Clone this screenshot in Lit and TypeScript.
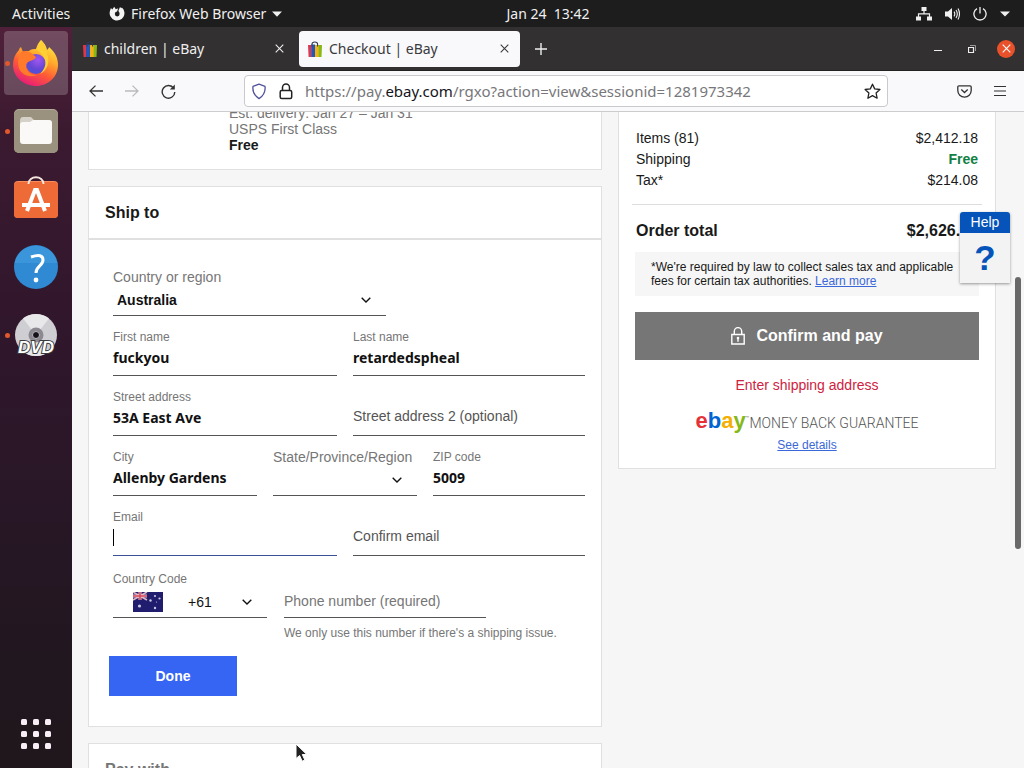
import { LitElement, html, css, svg } from "lit";
import { customElement } from "lit/decorators.js";
import { classMap } from "lit/directives/class-map.js";

const chevron = html`<svg class="chev" viewBox="0 0 10 6" width="10" height="6" aria-hidden="true">
  <path d="M.7.8 5 5 9.3.8" fill="none" stroke="#111" stroke-width="1.4" />
</svg>`;

const bag = html`<svg width="14" height="16" viewBox="0 0 14 16" aria-hidden="true">
  <path d="M0 4h3.5v12H0.6z" fill="#e0364c" />
  <path d="M3.2 3.5H7V16H3.2z" fill="#2458b8" />
  <path d="M7 4h4v12H7z" fill="#f2b31a" />
  <path d="M10.7 4H14l-.5 12h-2.8z" fill="#86b817" />
  <path d="M4 5.5V3.2C4 .2 9.6.2 9.6 3.2v2.3" fill="none" stroke="#333b52" stroke-width="1.1" />
</svg>`;

const cross = html`<svg width="9" height="9" viewBox="0 0 9 9" aria-hidden="true">
  <path d="M.7.7l7.6 7.6M8.3.7L.7 8.3" stroke="currentColor" stroke-width="1.1" />
</svg>`;

@customElement("desktop-bar")
class DesktopBar extends LitElement {
  static styles = css`
    :host {
      display: grid;
      grid-template-columns: 72px 1fr auto 1fr;
      align-items: center;
      height: 27px;
      background: #1d1d1d;
      color: #f0f0f0;
      font: 14px/27px "Noto Sans", sans-serif;
      white-space: nowrap;
    }
    button {
      border: 0;
      padding: 0;
      background: none;
      color: inherit;
      font: inherit;
      display: flex;
      align-items: center;
    }
    .activities { padding-left: 12px; }
    .app { padding-left: 37px; gap: 6px; }
    .clock { white-space: pre; }
    .tray { justify-self: end; gap: 13px; padding-right: 14px; }
  `;
  render() {
    return html`
      <button class="activities">Activities</button>
      <button class="app">
        <svg width="16" height="16" viewBox="0 0 16 16" aria-hidden="true">
          <path d="M5.200.8 6.800 3.200q1-.7 2.400-.7L8 5.600a2.400 2.400 0 1 0 2.600 2.400c0-1.400-.6-2.300-1.300-3L11 1l1.300 1.300.6-.8A7.400 7.400 0 1 1 .8 5.600L1.900 2l1.400 1.400z" fill="#f4f4f4" />
        </svg>
        Firefox Web Browser
        <svg width="10" height="6" viewBox="0 0 10 6" aria-hidden="true"><path d="M0 .5h10L5 5.8z" fill="#f0f0f0" /></svg>
      </button>
      <button class="clock">Jan 24  13:42</button>
      <button class="tray" aria-label="System menu">
        <svg width="16" height="14" viewBox="0 0 16 14" fill="#f0f0f0">
          <path d="M5.5 0h5v4h-5zM0 9.5h5v4H0zM11 9.5h5v4h-5z" />
          <path d="M8 3.5v3.2M2.5 10V6.8h11V10" fill="none" stroke="#f0f0f0" stroke-width="1.2" />
        </svg>
        <svg width="15" height="14" viewBox="0 0 15 14" fill="#f0f0f0">
          <path d="M0 4.5h3L7 1v12L3 9.5H0z" />
          <path d="M9 4.6q1.6 2.4 0 4.8M11 3q2.6 4 0 8M13 1.6q3 5.4 0 10.8" fill="none" stroke="#f0f0f0" stroke-width="1.1" />
        </svg>
        <svg width="14" height="14" viewBox="0 0 14 14" fill="none" stroke="#f0f0f0" stroke-width="1.3">
          <path d="M4 1.6a6.1 6.1 0 1 0 6 0M7 0v6.5" />
        </svg>
        <svg width="10" height="6" viewBox="0 0 10 6"><path d="M0 .5h10L5 5.5z" fill="#f0f0f0" /></svg>
      </button>
    `;
  }
}

const dockIcons = {
  firefox: svg`
    <defs>
      <linearGradient id="flame" x1=".8" y1="0" x2=".3" y2="1">
        <stop offset="0" stop-color="#fff04a" /><stop offset=".35" stop-color="#ffae2b" />
        <stop offset=".65" stop-color="#ff5a36" /><stop offset="1" stop-color="#e5197c" />
      </linearGradient>
      <radialGradient id="globe" cx=".6" cy=".3" r=".8">
        <stop offset="0" stop-color="#a156f0" /><stop offset=".6" stop-color="#6546d4" /><stop offset="1" stop-color="#3d5bd8" />
      </radialGradient>
    </defs>
    <path d="M28 0c3 3 5 5 6 10 1-1 2-2 2-3 6 5 9 11 9 18 0 12-10 21-22 21S0 37 0 25c0-6 2-11 6-15 0 0 0-2 2-3l2 5c2-1 4-1 6-1 2-2 5-2 7-2 1-4 3-7 5-9z" fill="url(#flame)" />
    <circle cx="23" cy="24" r="10" fill="url(#globe)" />
    <path d="M8 12c4-2 7-1 10 1l5 4c-1 3-4 3-6 4-3 1-4 3-4 6 1 5 6 8 11 8-9 4-19-2-19-12 0-4 1-8 3-11z" fill="#ff7a2b" />
    <path d="M23 9c3-2 5-6 5-9 4 4 6 9 6 14 4 9-1 17-7 20 6-6 7-13 3-18-2-3-4-5-7-7z" fill="#ffcf35" />`,
  files: svg`
    <rect x="1" y="1" width="44" height="44" rx="5" fill="#b3ab9b" />
    <rect x="1" y="2" width="44" height="43" rx="5" fill="#9a917f" />
    <path d="M7 13q0-4 3-4h8l3 3h14q4 0 4 4v4H7z" fill="#d5d0c8" />
    <path d="M7 17q0-3 3-3h7l3-2h16q3 0 3 3v18q0 3-3 3H10q-3 0-3-3z" fill="#fbf9f7" />`,
  software: svg`
    <rect x="1" y="5" width="44" height="37" rx="4" fill="#f98d5e" />
    <rect x="1" y="6" width="44" height="36" rx="4" fill="#ee6a36" />
    <path d="M15.500 8c0-9 15-9 15 0" fill="none" stroke="#f5e6df" stroke-width="2" />
    <path d="M14 35 22 14h2l8 21" fill="none" stroke="#fff" stroke-width="4" />
    <path d="M9 27h28v4H9z" fill="#fff" />`,
  help: svg`
    <circle cx="23" cy="23" r="22" fill="#2f8ad3" />
    <path d="M1.500 19a22 22 0 0 1 43 0z" fill="#45a0e2" opacity=".5" />
    <path d="M18 13q12-4 12 3c0 6-7 6-7 13" fill="none" stroke="#fff" stroke-width="3" />
    <circle cx="23" cy="36" r="2.400" fill="#fff" />`,
  dvd: svg`
    <circle cx="23" cy="23" r="21" fill="#cfced3" />
    <path d="M23 23 10 6.500A21 21 0 0 1 36 6.500zM23 23 10 39.500a21 21 0 0 0 26 0z" fill="#e8e7ea" />
    <circle cx="23" cy="23" r="7.500" fill="#8c8a90" />
    <circle cx="23" cy="23" r="3.500" fill="#151318" stroke="#bdbbc2" />
    <text x="23" y="41" text-anchor="middle" font-family="Liberation Sans" font-size="17" font-weight="700" font-style="italic" fill="#fff" stroke="#3a3a3d" stroke-width="2" paint-order="stroke">DVD</text>`,
};

@customElement("desktop-dock")
class DesktopDock extends LitElement {
  static styles = css`
    :host {
      display: flex;
      flex-direction: column;
      gap: 4px;
      width: 72px;
      box-sizing: border-box;
      padding: 4px 4px 2px;
      background: linear-gradient(#50203a 0, #3b1a30 14%, #2f162b 45%, #291727 62%, #21171f 85%, #20171c);
    }
    button {
      position: relative;
      border: 0;
      padding: 0;
      height: 64px;
      border-radius: 4px;
      background: none;
      display: grid;
      place-items: center;
    }
    .current { background: rgba(255, 255, 255, 0.2); }
    .running::before {
      content: "";
      position: absolute;
      left: 1px;
      top: 30px;
      width: 5px;
      height: 5px;
      border-radius: 50%;
      background: #e2582c;
    }
    .grid { margin-top: auto; }
  `;
  render() {
    const items: [keyof typeof dockIcons, string, boolean][] = [
      ["firefox", "Firefox Web Browser", true],
      ["files", "Files", true],
      ["software", "Ubuntu Software", false],
      ["help", "Help", false],
      ["dvd", "DVD", true],
    ];
    return html`
      ${items.map(
        ([icon, name, running]) => html`<button aria-label=${name} class=${classMap({ running, current: icon === "firefox" })}>
          <svg width="46" height="46" viewBox="0 0 46 46">${dockIcons[icon]}</svg>
        </button>`
      )}
      <button class="grid" aria-label="Show Applications">
        <svg width="30" height="30" viewBox="0 0 30 30" fill="#f8eef6">
          ${[0, 12, 24].map((y) => [0, 12, 24].map((x) => svg`<rect x=${x} y=${y} width="6" height="6" rx="1.500" />`))}
        </svg>
      </button>
    `;
  }
}

@customElement("browser-chrome")
class BrowserChrome extends LitElement {
  static styles = css`
    :host {
      display: block;
      font: 14px/20px "Noto Sans", sans-serif;
      white-space: nowrap;
    }
    button {
      border: 0;
      padding: 0;
      background: none;
      color: inherit;
      display: grid;
      place-items: center;
    }
    .tabs {
      display: flex;
      align-items: center;
      gap: 4px;
      height: 44px;
      padding: 0 9px 0 2px;
      background: #323031;
      box-sizing: border-box;
      border-bottom: 1px solid #222;
      color: #eee;
    }
    .tab {
      display: flex;
      align-items: center;
      gap: 7px;
      width: 221px;
      height: 36px;
      box-sizing: border-box;
      padding: 0 7px 0 9px;
      border-radius: 4px;
    }
    .active { background: #f9f9fb; color: #3a3a40; }
    .title { flex: 1; color: inherit; text-decoration: none; }
    .close { width: 18px; height: 18px; }
    .new { width: 34px; height: 34px; }
    .controls { margin-left: auto; display: flex; align-items: center; gap: 16px; }
    .controls button { width: 18px; height: 18px; border-radius: 50%; }
    .controls .quit { background: #e9512b; color: #fff; }
    .nav {
      display: flex;
      align-items: center;
      height: 40px;
      padding: 0 6px;
      background: #f9f9fb;
      border-bottom: 1px solid #ccc;
      color: #333;
    }
    .nav > button { width: 36px; height: 36px; }
    .url {
      flex: 1;
      min-width: 0;
      margin: 0 58px;
      height: 32px;
      box-sizing: border-box;
      border: 1px solid #c9c9ce;
      border-radius: 4px;
      background: #fff;
      display: flex;
      align-items: center;
      padding: 0 6px;
      gap: 12px;
    }
    .address { flex: 1; overflow: hidden; color: #77777b; font-size: 15px; outline: 0; }
    .host { color: #15141a; }
  `;
  render() {
    return html`
      <div class="tabs">
        <div class="tab">${bag}<a class="title" href="#">children | eBay</a><button class="close" aria-label="Close tab">${cross}</button></div>
        <div class="tab active">${bag}<a class="title" href="#">Checkout | eBay</a><button class="close" aria-label="Close tab">${cross}</button></div>
        <button class="new" aria-label="New tab">
          <svg width="12" height="12" viewBox="0 0 12 12"><path d="M6 0v12M0 6h12" stroke="#eee" stroke-width="1.400" /></svg>
        </button>
        <div class="controls">
          <button aria-label="Minimize"><svg width="8" height="6" viewBox="0 0 8 6"><path d="M0 4.500h8" stroke="#eee" /></svg></button>
          <button aria-label="Restore">
            <svg width="8" height="8" viewBox="0 0 8 8" fill="none" stroke="#eee"><path d="M.5 2.500h5v5h-5z" stroke-width="1.200" /><path d="M2 .5h5.500V6" stroke="#999" /></svg>
          </button>
          <button class="quit" aria-label="Close window">${cross}</button>
        </div>
      </div>
      <div class="nav">
        <button aria-label="Back"><svg width="14" height="12" viewBox="0 0 14 12"><path d="M6.500.6 1 6l5.500 5.400M1 6h13" fill="none" stroke="#333" stroke-width="1.300" /></svg></button>
        <button aria-label="Forward"><svg width="14" height="12" viewBox="0 0 14 12"><path d="M7.500.6 13 6l-5.500 5.400M13 6H0" fill="none" stroke="#bbb" stroke-width="1.300" /></svg></button>
        <button aria-label="Reload">
          <svg width="15" height="15" viewBox="0 0 15 15"><path d="M12.700 4.300A6.300 6.300 0 1 0 13.800 8" fill="none" stroke="#333" stroke-width="1.400" /><path d="M13.800.6v5H8.800z" fill="#333" /></svg>
        </button>
        <div class="url">
          <svg width="16" height="17" viewBox="0 0 16 17"><path d="M8 1.200 14 3.300q1 7.700-6 12.300Q1 11 2 3.300z" fill="none" stroke="#50529a" stroke-width="1.300" stroke-linejoin="round" /></svg>
          <svg width="14" height="17" viewBox="0 0 14 17" fill="none" stroke="#222" stroke-width="1.500"><rect x="1.200" y="7.500" width="11.500" height="8" rx="1.500" /><path d="M3.500 7.500V4.500a3.500 3.500 0 0 1 7 0v3" /></svg>
          <div class="address" role="textbox" contenteditable="true" spellcheck="false" aria-label="Address">https://pay.<span class="host">ebay.com</span>/rgxo?action=view&amp;sessionid=1281973342</div>
          <button aria-label="Bookmark this page">
            <svg width="17" height="17" viewBox="0 0 17 17"><path d="m8.500 1.200 2.200 4.700 5.200.6-3.800 3.500 1 5.200-4.600-2.600-4.600 2.600 1-5.200L1.100 6.500l5.200-.6z" fill="none" stroke="#222" stroke-width="1.300" stroke-linejoin="round" /></svg>
          </button>
        </div>
        <button aria-label="Save to Pocket">
          <svg width="15" height="13" viewBox="0 0 15 13" fill="none" stroke="#333" stroke-width="1.300"><path d="M2 .8h11q1.200 0 1.200 1.200v3.500a6.700 6.700 0 0 1-13.400 0V2Q.8.8 2 .8z" /><path d="m4.300 4.500 3.200 3 3.200-3" /></svg>
        </button>
        <button aria-label="Menu"><svg width="12" height="12" viewBox="0 0 12 12"><path d="M0 1.500h12M0 6h12M0 10.500h12" stroke="#333" stroke-width="1.200" /></svg></button>
      </div>
    `;
  }
}

@customElement("ship-form")
class ShipForm extends LitElement {
  static styles = css`
    :host { display: block; padding: 28px 16px 30px 24px; font: 14px/20px "Liberation Sans", Arial, sans-serif; }
    .row { display: grid; column-gap: 16px; height: 60px; align-items: end; }
    .two { grid-template-columns: 28fr 29fr; }
    .three { grid-template-columns: 18fr 18fr 19fr; }
    .phone { grid-template-columns: 154px 202px; column-gap: 17px; height: 62px; }
    .field { position: relative; display: flex; flex-direction: column; min-width: 0; }
    .country { width: 273px; }
    label { color: #767676; font-size: 12px; line-height: 16px; white-space: nowrap; }
    .large { font-size: 14px; line-height: 18px; }
    input, select {
      width: 100%;
      height: 31px;
      box-sizing: border-box;
      margin: 0;
      border: 0;
      border-bottom: 1px solid #555;
      border-radius: 0;
      padding: 0 0 6px;
      background: none;
      outline: 0;
      appearance: none;
      font: 700 14px/20px "Noto Sans", sans-serif;
      color: #111;
    }
    .empty { padding-bottom: 8px; font: 14px/20px "Liberation Sans", Arial, sans-serif; }
    .empty::placeholder { color: #555; }
    .soft { padding-bottom: 2px; }
    .soft::placeholder { color: #767676; }
    .focused { border-color: #3c5096; }
    select { height: 30px; padding: 0 4px 2px; font: 700 14px/20px "Liberation Sans", Arial, sans-serif; }
    .code select { height: 31px; padding: 0 0 0 75px; font-weight: 400; }
    .chev { position: absolute; right: 15px; bottom: 13px; pointer-events: none; }
    .caret { position: absolute; left: 0; bottom: 10px; width: 1px; height: 17px; background: #000; }
    .flag { position: absolute; left: 20px; bottom: 6px; }
    .hint { margin: 7px 0 14px 171px; color: #767676; font-size: 12px; line-height: 17px; }
    .done {
      margin-left: -4px;
      width: 128px;
      height: 40px;
      border: 0;
      background: #3665f3;
      color: #fff;
      font: 700 14px/20px "Liberation Sans", Arial, sans-serif;
    }
  `;

  private text(id: string, label: string, value: string) {
    return html`<div class="field"><label for=${id}>${label}</label><input id=${id} .value=${value} /></div>`;
  }
  private blank(id: string, label: string, soft = false) {
    return html`<div class="field"><input class=${classMap({ empty: true, soft })} id=${id} aria-label=${label} placeholder=${label} /></div>`;
  }

  render() {
    return html`
      <div class="field country">
        <label class="large" for="country">Country or region</label>
        <select id="country"><option>Australia</option></select>${chevron}
      </div>
      <div class="row two">${this.text("first", "First name", "fuckyou")}${this.text("last", "Last name", "retardedspheal")}</div>
      <div class="row two">${this.text("street", "Street address", "53A East Ave")}${this.blank("street2", "Street address 2 (optional)")}</div>
      <div class="row three">
        ${this.text("city", "City", "Allenby Gardens")}
        <div class="field">
          <label class="large" for="state">State/Province/Region</label>
          <select id="state"><option></option></select>${chevron}
        </div>
        ${this.text("zip", "ZIP code", "5009")}
      </div>
      <div class="row two">
        <div class="field"><label for="email">Email</label><input class="focused" id="email" type="email" /><span class="caret"></span></div>
        ${this.blank("email2", "Confirm email")}
      </div>
      <div class="row phone">
        <div class="field code">
          <label for="code">Country Code</label>
          <select id="code"><option>+61</option></select>${chevron}
          <svg class="flag" width="30" height="20" viewBox="0 0 30 20" aria-hidden="true">
            <path d="M0 0h30v20H0z" fill="#201c6e" />
            <path d="m0 0 14 8M14 0 0 8" stroke="#dcb4c4" stroke-width="1.600" />
            <path d="M7 0v8M0 4h14" stroke="#e6c3cd" stroke-width="3" />
            <path d="M7 0v8M0 4h14" stroke="#d8485c" stroke-width="1.600" />
            <g fill="#c9c6e4"><circle cx="6.500" cy="14" r="1.600" /><circle cx="22" cy="4" r="1.100" /><circle cx="17.500" cy="8.500" r="1.200" /><circle cx="26.500" cy="6.500" r="1.100" /><circle cx="22" cy="16" r="1.200" /><circle cx="23.500" cy="10" r=".6" /></g>
          </svg>
        </div>
        ${this.blank("phone", "Phone number (required)", true)}
      </div>
      <p class="hint">We only use this number if there's a shipping issue.</p>
      <button class="done">Done</button>
    `;
  }
}

@customElement("order-summary")
class OrderSummary extends LitElement {
  static styles = css`
    :host {
      display: block;
      box-sizing: border-box;
      padding: 16px 13px 14px;
      background: #fff;
      border: 1px solid #e0e0e0;
      border-top: 0;
      color: #191919;
      font: 14px/21px "Liberation Sans", Arial, sans-serif;
    }
    dl { margin: 0; padding: 0 4px 13px; border-bottom: 1px solid #ddd; }
    .line { display: flex; justify-content: space-between; }
    dd { margin: 0; }
    .free { font-weight: 700; color: #118044; }
    .total { padding: 15px 4px 11px; font-size: 16px; font-weight: 700; }
    .inset { padding: 0 3px; text-align: center; }
    .note { margin: 0; padding: 8px 16px; background: #f6f6f6; font-size: 12px; line-height: 14px; text-align: left; }
    a { color: #3b68d8; }
    .pay {
      width: 100%;
      height: 48px;
      margin: 16px 0 15px;
      border: 0;
      background: #767676;
      color: #fff;
      font: 700 16px/20px "Liberation Sans", Arial, sans-serif;
      display: flex;
      align-items: center;
      justify-content: center;
      gap: 11px;
    }
    .error { margin: 0; color: #cf2240; }
    .logo { display: flex; justify-content: center; align-items: baseline; margin-top: 12px; color: #555; font: 300 14px/26px Roboto, "Liberation Sans", sans-serif; white-space: nowrap; }
    .ebay { font: 700 22px/26px "Liberation Sans", Arial, sans-serif; }
    .mark { font-size: 6px; line-height: 20px; align-self: flex-start; }
    .e { color: #e53238; }
    .b { color: #0064d2; }
    .a { color: #f5af02; }
    .y { color: #86b817; }
    .see { display: block; width: fit-content; margin: 0 auto; font-size: 12px; line-height: 18px; }
  `;
  render() {
    return html`
      <dl>
        <div class="line"><dt>Items (81)</dt><dd>$2,412.18</dd></div>
        <div class="line"><dt>Shipping</dt><dd class="free">Free</dd></div>
        <div class="line"><dt>Tax*</dt><dd>$214.08</dd></div>
      </dl>
      <div class="line total"><span>Order total</span><span>$2,626.26</span></div>
      <div class="inset">
        <p class="note">*We're required by law to collect sales tax and applicable fees for certain tax authorities. <a href="#">Learn more</a></p>
        <button class="pay">
          <svg width="14" height="18" viewBox="0 0 14 18" fill="none" stroke="#fff" stroke-width="1.400" aria-hidden="true">
            <path d="M.8 7.500h12.400v9.500H.8zM3.300 7.500V4.300a3.700 3.700 0 0 1 7.400 0v3.200" /><path d="M7 12v2.800" /><circle cx="7" cy="11" r="1.300" fill="#fff" stroke="none" />
          </svg>
          Confirm and pay
        </button>
        <p class="error">Enter shipping address</p>
        <div class="logo"><span class="ebay"><span class="e">e</span><span class="b">b</span><span class="a">a</span><span class="y">y</span></span><span class="mark">™</span><span>MONEY BACK GUARANTEE</span></div>
        <a class="see" href="#">See details</a>
      </div>
    `;
  }
}

@customElement("app-root")
class AppRoot extends LitElement {
  static styles = css`
    :host { display: flex; flex-direction: column; height: 100vh; overflow: hidden; position: relative; }
    .desktop { flex: 1; min-height: 0; display: flex; }
    .window { flex: 1; min-width: 0; display: flex; flex-direction: column; }
    .page {
      position: relative;
      flex: 1;
      min-height: 0;
      overflow: hidden;
      background: #f6f6f6;
      font: 14px/16px "Liberation Sans", Arial, sans-serif;
      color: #191919;
    }
    .columns { display: grid; grid-template-columns: minmax(0, 1fr) 378px; gap: 16px; align-items: start; padding: 0 28px 0 16px; }
    .left { display: flex; flex-direction: column; gap: 16px; margin-top: -7px; }
    .card { background: #fff; border: 1px solid #e0e0e0; }
    .delivery { border-top: 0; padding: 0 140px 16px; color: #767676; }
    .delivery strong { color: #191919; }
    .delivery div { white-space: nowrap; }
    h2 { margin: 0; padding: 16px; font-size: 16px; line-height: 19px; border-bottom: 2px solid #e0e0e0; }
    .muted { color: #767676; }
    .help { position: absolute; right: 14px; top: 100px; width: 50px; border: 0; padding: 0; border-radius: 3px 3px 0 0; overflow: hidden; background: #f3f3f3; box-shadow: 0 1px 3px rgba(0, 0, 0, 0.4); color: #0654ba; font-family: "Liberation Sans", Arial, sans-serif; }
    .help b { display: block; background: #0654ba; color: #fff; font-size: 14px; font-weight: 400; line-height: 21px; }
    .help span { display: block; font: 700 35px/50px "Liberation Sans", Arial, sans-serif; }
    .thumb { position: absolute; right: 3px; top: 165px; width: 6px; height: 272px; border-radius: 3px; background: #696969; }
    .pointer { position: absolute; left: 295px; top: 743px; }
  `;
  render() {
    return html`
      <desktop-bar></desktop-bar>
      <div class="desktop">
        <desktop-dock></desktop-dock>
        <div class="window">
          <browser-chrome></browser-chrome>
          <main class="page">
            <div class="columns">
              <div class="left">
                <section class="card delivery">
                  <div>Est. delivery: Jan 27 – Jan 31</div>
                  <div>USPS First Class</div>
                  <strong>Free</strong>
                </section>
                <section class="card"><h2>Ship to</h2><ship-form></ship-form></section>
                <section class="card"><h2 class="muted">Pay with</h2></section>
              </div>
              <order-summary></order-summary>
            </div>
            <button class="help"><b>Help</b><span>?</span></button>
            <div class="thumb"></div>
          </main>
        </div>
      </div>
      <svg class="pointer" width="14" height="20" viewBox="0 0 14 20" aria-hidden="true">
        <path d="M1 1v14.500l3.600-3 2.600 5.700 2.600-1.200-2.500-5.500h4.500z" fill="#222" stroke="#fff" />
      </svg>
    `;
  }
}
